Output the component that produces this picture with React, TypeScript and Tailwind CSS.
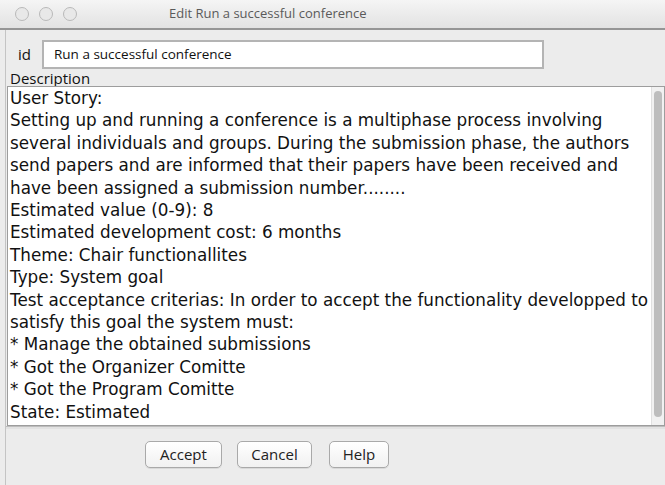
import React from "react";

const lines = [
  "User Story:",
  "Setting up and running a conference is a multiphase process involving",
  "several individuals and groups. During the submission phase, the authors",
  "send papers and are informed that their papers have been received and",
  "have been assigned a submission number........",
  "Estimated value (0-9): 8",
  "Estimated development cost: 6 months",
  "Theme: Chair functionallites",
  "Type: System goal",
  "Test acceptance criterias: In order to accept the functionality developped to",
  "satisfy this goal the system must:",
  "* Manage the obtained submissions",
  "* Got the Organizer Comitte",
  "* Got the Program Comitte",
  "State: Estimated",
];

function DialogButton({ label, width }: { label: string; width: string }) {
  return (
    <button
      className={`${width} h-[27px] rounded-[5px] border border-[#a9a9a9] bg-gradient-to-b from-white to-[#f1f1f1] text-[15px] text-[#222] font-['Open_Sans',sans-serif] shadow-[0_1px_0_rgba(0,0,0,0.08)]`}
    >
      {label}
    </button>
  );
}

export default function App() {
  return (
    <div className="w-[665px] h-[485px] overflow-hidden bg-[#ececec] text-[#111] font-['DejaVu_Sans',sans-serif] flex flex-col">
      {/* title bar */}
      <div className="relative h-[30px] shrink-0 bg-gradient-to-b from-[#f5f5f5] to-[#e2e2e2] border-b-2 border-[#959595] flex items-center">
        <div className="flex gap-[10px] pl-[15px]">
          <span className="w-[14px] h-[14px] rounded-full border border-[#b9b9b9] bg-[#e8e8e8]" />
          <span className="w-[14px] h-[14px] rounded-full border border-[#b9b9b9] bg-[#e8e8e8]" />
          <span className="w-[14px] h-[14px] rounded-full border border-[#b9b9b9] bg-[#e8e8e8]" />
        </div>
        <span className="ml-[92px] text-[13px] text-[#5a5a5a] font-['Open_Sans',sans-serif]">
          Edit Run a successful conference
        </span>
      </div>

      <div className="flex-1 flex flex-col ml-[5px] border-l border-[#c4c4c4]">
        {/* id row */}
        <div className="flex items-center h-[40px] pt-[8px]">
          <span className="pl-[12px] w-[36px] text-[15px] font-['Open_Sans',sans-serif]">id</span>
          <div className="w-[502px] h-[29px] border-2 border-[#b4b4b4] bg-white flex items-center pl-[10px] text-[13.5px] font-['Open_Sans',sans-serif]">
            Run a successful conference
          </div>
        </div>

        {/* description */}
        <div className="pl-[4px] text-[15px] leading-[16px] font-['Open_Sans',sans-serif]">
          Description
        </div>
        <div className="ml-[1px] h-[340px] flex border border-[#9d9d9d] bg-white">
          <div className="flex-1 pl-[2px] text-[16.8px] leading-[22.4px] whitespace-nowrap overflow-hidden">
            {lines.map((l) => (
              <div key={l}>{l}</div>
            ))}
          </div>
          <div className="w-[13px] bg-[#f1f1f1] border-l border-[#e0e0e0] pt-[4px] pb-[8px] flex justify-center">
            <div className="w-[8px] h-full rounded-full bg-[#bdbdbd]" />
          </div>
        </div>
        <div className="h-[3px] border-t border-[#bdbdbd] bg-[#e2e2e2]" />

        {/* actions */}
        <div className="flex gap-[15px] pt-[12px] pl-[139px]">
          <DialogButton label="Accept" width="w-[77px]" />
          <DialogButton label="Cancel" width="w-[75px]" />
          <DialogButton label="Help" width="w-[60px] ml-[2px]" />
        </div>
      </div>
    </div>
  );
}
